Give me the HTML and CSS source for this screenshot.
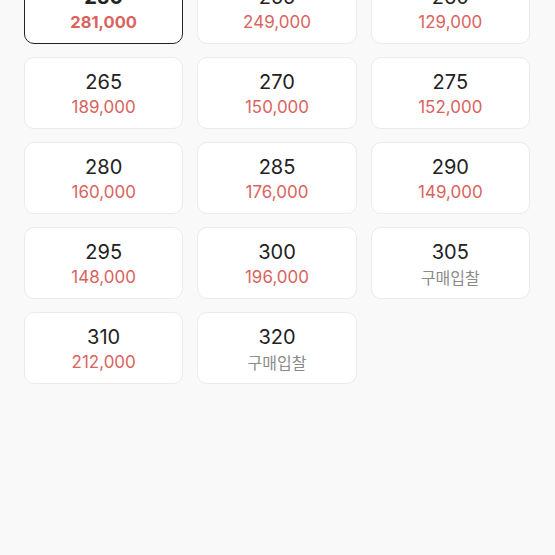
FILE: index.html
```html
<!DOCTYPE html>
<html lang="ko">
<head>
    <meta charset="UTF-8">
    <meta name="viewport" content="width=device-width, initial-scale=1.0">
    <title>사이즈 선택</title>
    <link rel="stylesheet" href="styles.css">
</head>
<body>

    <div class="size-grid">
        <div class="size-card selected">
            <div class="size">250</div>
            <div class="price">281,000</div>
        </div>
        <div class="size-card">
            <div class="size">255</div>
            <div class="price">249,000</div>
        </div>
        <div class="size-card">
            <div class="size">260</div>
            <div class="price">129,000</div>
        </div>
        <div class="size-card">
            <div class="size">265</div>
            <div class="price">189,000</div>
        </div>
        <div class="size-card">
            <div class="size">270</div>
            <div class="price">150,000</div>
        </div>
        <div class="size-card">
            <div class="size">275</div>
            <div class="price">152,000</div>
        </div>
        <div class="size-card">
            <div class="size">280</div>
            <div class="price">160,000</div>
        </div>
        <div class="size-card">
            <div class="size">285</div>
            <div class="price">176,000</div>
        </div>
        <div class="size-card">
            <div class="size">290</div>
            <div class="price">149,000</div>
        </div>
        <div class="size-card">
            <div class="size">295</div>
            <div class="price">148,000</div>
        </div>
        <div class="size-card">
            <div class="size">300</div>
            <div class="price">196,000</div>
        </div>
        <div class="size-card">
            <div class="size">305</div>
            <div class="price bid">구매입찰</div>
        </div>
        <div class="size-card">
            <div class="size">310</div>
            <div class="price">212,000</div>
        </div>
        <div class="size-card">
            <div class="size">320</div>
            <div class="price bid">구매입찰</div>
        </div>
    </div>

</body>
</html>
```

FILE: styles.css
```css
body {
    font-family: Inter, "Noto Sans CJK KR", sans-serif;
    background-color: #f9f9f9;
    margin: 0;
    height: 555px;
    overflow: hidden;
}
.size-grid {
    display: grid;
    grid-template-columns: repeat(3, 1fr);
    gap: 13px 14px;
    margin-top: -28px;
    padding: 0 25px 0 24px;
}
.size-card {
    background-color: #ffffff;
    border: 1px solid #ebebeb;
    border-radius: 10px;
    height: 72px;
    box-sizing: border-box;
    padding-top: 12px;
    text-align: center;
}
.size-card.selected {
    border: 1.5px solid #222222;
}
.size {
    font-size: 20px;
    line-height: 24px;
    color: #222222;
}
.selected .size {
    font-weight: 700;
}
.price {
    font-size: 17px;
    line-height: 22px;
    margin-top: 2px;
    color: #d9645e;
}
.selected .price {
    font-weight: 700;
    font-size: 16.5px;
}
.price.bid {
    color: #8a8a8a;
    font-family: "Noto Sans CJK KR", sans-serif;
    font-size: 16px;
}
```
